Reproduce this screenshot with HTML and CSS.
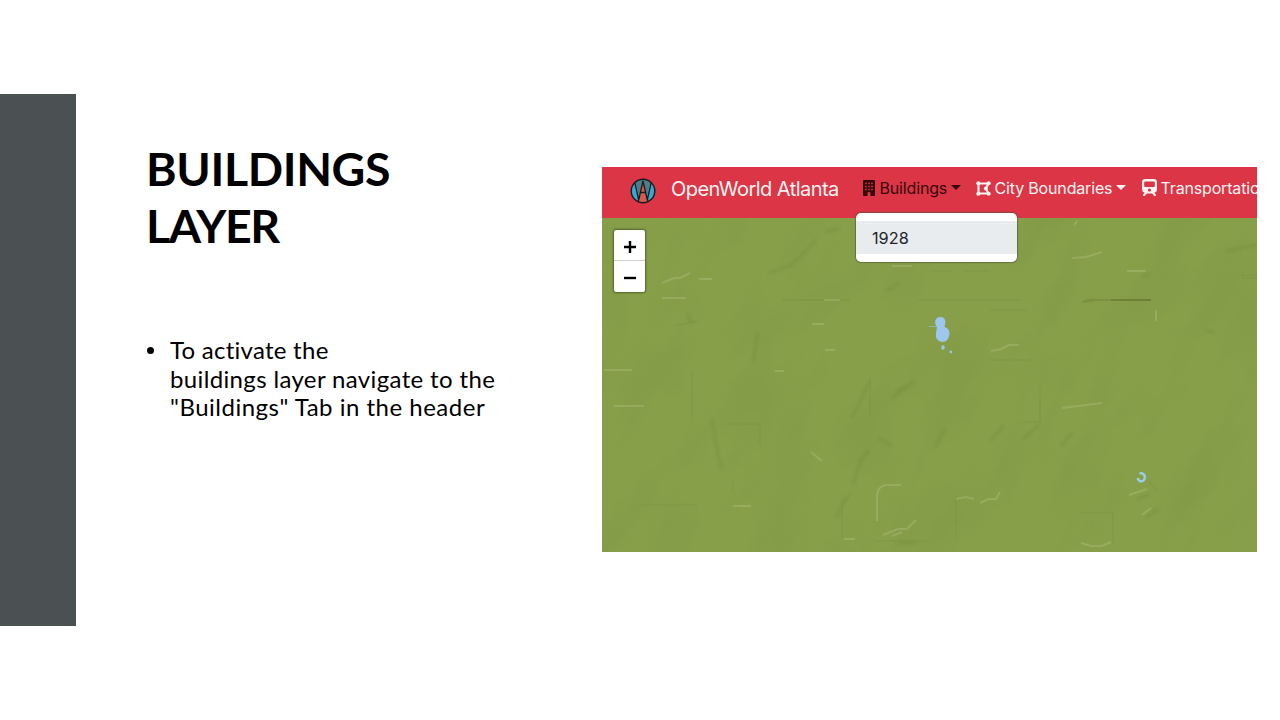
FILE: index.html
```html
<!DOCTYPE html>
<html lang="en">
<head>
<meta charset="utf-8">
<title>Buildings Layer</title>
<link rel="stylesheet" href="styles.css">
</head>
<body>
<main class="slide">
  <div class="accent"></div>
  <section class="copy">
    <h1 class="title"><span class="line t1">BUILDINGS</span><span class="line t2">LAYER</span></h1>
    <ul class="points">
      <li class="point"><span class="line l1">To activate the</span><span class="line l2">buildings layer navigate to the</span><span class="line l3">"Buildings" Tab in the header</span></li>
    </ul>
  </section>
  <section class="app">
    <nav class="navbar">
      <svg class="logo" viewBox="0 0 26 26">
        <defs><clipPath id="disc"><circle cx="13" cy="13" r="11.8"/></clipPath></defs>
        <g clip-path="url(#disc)">
          <rect width="26" height="26" fill="#35a9d0"/>
          <path d="M5 0H21L17 19L13 4L9 19Z" fill="#4d7d86"/>
          <path d="M13 3L6.500 26H19.500Z" fill="#d9594f"/>
          <path d="M4.500 3L8.700 22L13 3L17.300 22L21.500 3M8.500 22L6.500 26M17.500 22L19.500 26M10.800 14.500H15.200" fill="none" stroke="#171b20" stroke-width="1.300"/>
        </g>
        <circle cx="13" cy="13" r="11.8" fill="none" stroke="#171b20" stroke-width="1.400"/>
      </svg>
      <span class="brand">OpenWorld Atlanta</span>
      <span class="item active">
        <svg class="icon building" viewBox="0 0 12 16"><path fill-rule="evenodd" d="M1 0H11Q12 0 12 1V15Q12 16 11 16H7.500V13Q7.500 12 6 12T4.500 13V16H1Q0 16 0 15V1Q0 0 1 0ZM2.200 2.700V4.200H3.800V2.700ZM5.200 2.700V4.200H6.800V2.700ZM8.200 2.700V4.200H9.800V2.700ZM2.200 5.700V7.200H3.800V5.700ZM5.200 5.700V7.200H6.800V5.700ZM8.200 5.700V7.200H9.800V5.700ZM2.200 8.700V10.200H3.800V8.700ZM5.200 8.700V10.200H6.800V8.700ZM8.200 8.700V10.200H9.800V8.700Z"/></svg>
        <span class="label buildings">Buildings</span><i class="caret"></i>
      </span>
      <span class="item">
        <svg class="icon polygon" viewBox="0 0 15 15"><path d="M2.500 2.500H12.500L9.800 7.500L12.500 12.500H2.500Z" fill="none" stroke="currentColor" stroke-width="2.100"/><circle cx="2.300" cy="2.300" r="2"/><circle cx="12.700" cy="2.300" r="2"/><circle cx="9.800" cy="7.500" r="2"/><circle cx="12.700" cy="12.700" r="2"/><circle cx="2.300" cy="12.700" r="2"/></svg>
        <span class="label city">City Boundaries</span><i class="caret"></i>
      </span>
      <span class="item">
        <svg class="icon train" viewBox="0 0 14 16"><path fill-rule="evenodd" d="M3 0H11Q14 0 14 2.800V10.200Q14 12.500 11.500 13L13 14.700V16H11.500L9.500 13.700H4.500L2.500 16H1V14.700L2.500 13Q0 12.500 0 10.200V2.800Q0 0 3 0ZM3 2.400Q2 2.400 2 3.300V6.700Q2 7.500 3 7.500H11Q12 7.500 12 6.700V3.300Q12 2.400 11 2.400ZM7 8.900A1.500 1.500 0 1 0 7 11.900A1.500 1.500 0 1 0 7 8.900Z"/></svg>
        <span class="label transport">Transportation</span>
      </span>
    </nav>
    <div class="map">
      <svg class="terrain" viewBox="0 0 655 334">
        <defs>
          <filter id="relief" x="0" y="0" width="100%" height="100%" color-interpolation-filters="sRGB">
            <feTurbulence type="fractalNoise" baseFrequency=".022 .009" numOctaves="4" seed="8"/>
            <feColorMatrix values="0 0 0 0 .36  0 0 0 0 .44  0 0 0 0 .22  1.700 0 0 0 -.78"/>
          </filter>
          <filter id="soft" x="-5%" y="-5%" width="110%" height="110%"><feGaussianBlur stdDeviation="1.500"/></filter>
          <filter id="fine" x="-5%" y="-5%" width="110%" height="110%"><feGaussianBlur stdDeviation=".7"/></filter>
        </defs>
        <rect width="655" height="334" fill="#879f49"/>
        <g transform="rotate(28 327 167)" opacity=".13"><rect x="-100" y="-200" width="860" height="740" filter="url(#relief)"/></g>
        <g fill="none" stroke="#687e35" stroke-width="3" opacity=".25" filter="url(#soft)">
          <path d="M223 14L238 10M214 22L195 42L187 48L166 55M86 96L90 107M156 115L151 143M268 163L255 190L249 200M290 180L313 163M294 173L309 166M267 233L258 243L251 267M245 278L240 286L235 300M343 210L333 230M389 223L402 207M459 228L470 215M540 59L548 56M484 84L493 81M110 200L116 237L120 252M624 33L655 27M284 74L297 65M547 277L535 281M544 300L556 291M612 115L603 112M437 207L425 217L420 222M295 325H316M290 228L276 220"/>
        </g>
        <g fill="none" stroke="#6f843a" stroke-width="1" opacity=".3" filter="url(#fine)">
          <path d="M180 82H248M316 82H420M328 53H350M362 53H388M268 160V200M438 181V204H420M90 153V200M240 320V288L250 274M131 263V273M354 278V320M438 170V205M273 323H325M478 295H511V325M640 60H655M158 207V228M72 108L95 103M38 287H95M546 263L557 274M388 92H425M388 142H430M640 53V58L655 56M125 206H158"/>
        </g>
        <g fill="none" stroke="#b4c383" stroke-width="2" opacity=".36" filter="url(#fine)">
          <path d="M60 65L72 60H78L88 55M97 61H110M60 80H84M222 82H238M210 106H222M223 132H233M389 133L399 131L407 127H417M131 288H149M275 303V277Q276 268 284 267H299M354 281L364 279L372 281M378 285L387 281H394L398 274M281 317L296 311H305L314 302M242 321H253M290 318L300 314M479 325L489 328H500L509 324M554 92V103M470 40L484 39L500 34M12 188H42M472 7L475 3M209 234L220 243M460 190L500 185M290 48H310M525 53H544M540 297L549 290M527 277L545 271M2 152H30M173 153H182"/>
        </g>
        <path d="M480 84L490 82H509" fill="none" stroke="#687b32" stroke-width="1.500" opacity=".45" filter="url(#fine)"/>
        <path d="M509 82H549" stroke="#5d6f2b" stroke-width="1.300" opacity=".8"/>
        <g fill="#9dc7ef">
          <path d="M333 104Q334 99 338 99Q343 99 343.500 104L342.500 109Q347 110 347.500 115Q347 124 340 124Q333 123 334 115L335 109Q333 107 333 104Z"/>
          <ellipse cx="341" cy="129.500" rx="1.700" ry="2.200"/><ellipse cx="348.800" cy="134" rx="1.200" ry="1.400"/>
        </g>
        <path d="M327 108.500H335" stroke="#91b4a8" stroke-width="1"/>
        <path d="M537.500 255.800A3.600 4 0 1 1 535.700 260" fill="none" stroke="#9dcbea" stroke-width="2.500"/>
      </svg>
      <div class="zoom"><span class="plus"><svg viewBox="0 0 14 14"><path d="M7 1V13M1 7H13"/></svg></span><span class="minus"><svg viewBox="0 0 14 14"><path d="M1 7H13"/></svg></span></div>
      <div class="dropdown"><div class="option">1928</div></div>
    </div>
  </section>
</main>
</body>
</html>
```
FILE: styles.css
```css
* { box-sizing: border-box; }
body { margin: 0; background: #fff; }
.slide { width: 1280px; height: 720px; display: flex; overflow: hidden; }
.accent { width: 76px; height: 532px; margin-top: 94px; background: #4b5052; }
.copy { width: 526px; padding: 140px 0 0 70px; font-family: Lato, "Open Sans", sans-serif; color: #000; }
.title { margin: 0; font-size: 46.5px; line-height: 57px; font-weight: 700; }
.t1 { letter-spacing: -.35px; }
.t2 { letter-spacing: -1.4px; }
.points { margin: 82px 0 0; padding: 0 0 0 1px; list-style: none; }
.point { position: relative; padding-left: 23px; font-size: 24px; line-height: 28.5px; white-space: nowrap; }
.point::before { content: ""; position: absolute; left: 0; top: 11px; width: 7px; height: 7px; border-radius: 50%; background: #000; }
.line { display: block; }
.l1 { letter-spacing: .26px; }
.l2 { letter-spacing: .36px; }
.l3 { letter-spacing: .5px; }
.app { width: 655px; height: 385px; margin-top: 167px; overflow: hidden; font-family: Inter, Roboto, sans-serif; }
.navbar { height: 51px; padding: 0 0 9px 28px; display: flex; align-items: center; background: #dc3545; color: #fff; white-space: nowrap; }
.logo { width: 26px; height: 26px; margin-top: 5px; flex: none; }
.brand { width: 167px; margin: 2px 25px 0 15px; font-size: 20px; letter-spacing: -.54px; color: #fff4f3; }
.item { display: flex; align-items: center; height: 30px; margin-right: 16px; flex: none; color: #fff4f3; }
.active { color: #35080c; margin-right: 15.5px; }
.icon { flex: none; fill: currentColor; margin-right: 4px; }
.building { width: 12px; height: 16px; margin-right: 4.5px; }
.polygon { width: 15px; height: 15px; margin-right: 3.5px; }
.train { width: 15px; height: 17px; margin-top: -1px; }
.label { font-size: 16px; letter-spacing: -.16px; }
.buildings { width: 67px; }
.city { width: 117px; }
.caret { margin: -2px 0 0 4px; border: 5px solid transparent; border-top-color: currentColor; border-bottom: 0; }
.map { position: relative; height: 334px; }
.terrain { display: block; width: 655px; height: 334px; }
.zoom { position: absolute; left: 12px; top: 12px; width: 31px; height: 62px; background: #fff; border-radius: 2px; box-shadow: 0 0 2px 1px #52652b; }
.plus, .minus { height: 31px; display: flex; align-items: center; justify-content: center; }
.plus { border-bottom: 1px solid #ccc; padding-top: 4px; }
.minus { padding-top: 3px; }
.zoom svg { width: 14px; height: 14px; stroke: #000; stroke-width: 2.4px; }
.dropdown { position: absolute; left: 254px; top: -5px; width: 161px; height: 49px; padding: 8px 0; background: #fff; border-radius: 5px; box-shadow: 0 0 1px 1px rgba(70, 80, 45, .55); }
.option { height: 33px; line-height: 34px; padding-left: 16px; background: #e9ecef; color: #212529; font-size: 16.3px; }
```
